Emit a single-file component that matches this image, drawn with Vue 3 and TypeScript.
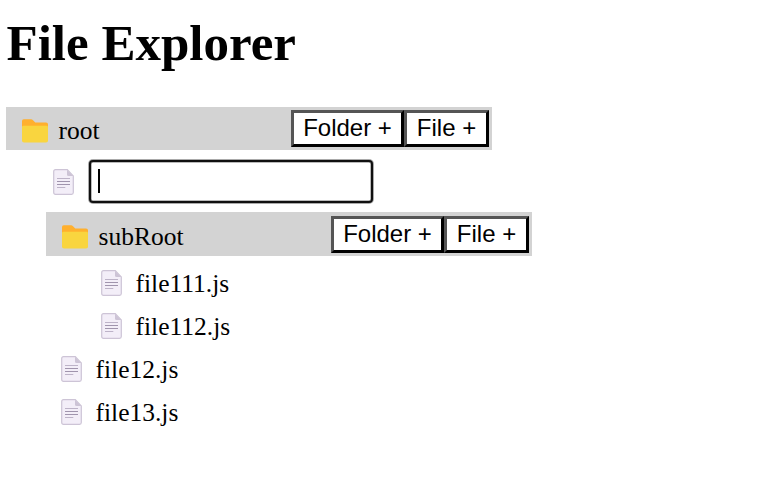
<script setup lang="ts">
import { nextTick, onMounted, ref } from 'vue'

interface Entry {
  name: string
  folder?: boolean
  adding?: boolean
  depth: number
}

const entries = ref<Entry[]>([
  { name: 'root', folder: true, adding: true, depth: 0 },
  { name: 'subRoot', folder: true, depth: 1 },
  { name: 'file111.js', depth: 2 },
  { name: 'file112.js', depth: 2 },
  { name: 'file12.js', depth: 1 },
  { name: 'file13.js', depth: 1 },
])

const draft = ref('')

onMounted(async () => {
  await nextTick()
  document.querySelector<HTMLInputElement>('.name-input')?.focus()
})
</script>

<template>
  <main class="explorer">
    <h1>File Explorer</h1>
    <template v-for="entry in entries" :key="entry.name">
      <div v-if="entry.folder" class="folder" :class="'depth-' + entry.depth">
        <svg class="folder-icon" viewBox="0 0 26 24">
          <path d="M0 2Q0 .3 1.700 .3H9Q10.200 .3 11 1.200L13.300 3.500H24Q26 3.500 26 5.300V9H0Z" fill="#ffb02e" />
          <path d="M0 8Q0 6.800 1.500 6.800H24.500Q26 6.800 26 8.200V21.700Q26 23.500 24 23.500H2Q0 23.500 0 21.700Z" fill="#f9d53f" />
        </svg>
        <span class="label">{{ entry.name }}</span>
        <div class="actions">
          <button type="button">Folder +</button>
          <button type="button">File +</button>
        </div>
      </div>
      <div v-else class="file" :class="'depth-' + entry.depth">
        <svg class="file-icon" viewBox="0 0 21 26">
          <path d="M2.500 .7H14.300L20.300 6.900V23.500Q20.300 25.300 18.500 25.300H2.500Q.7 25.300 .7 23.500V2.500Q.7 .7 2.500 .7Z" fill="#f3eef8" stroke="#cdc4d6" stroke-width="1.200" />
          <path d="M14 .7L20.300 7H15.500Q14 7 14 5.500Z" fill="#cdc4d6" />
          <path d="M4 9.500H17M4 18.500H12.300" stroke="#bdb3c8" stroke-width="1.100" />
          <path d="M4 12.500H17M4 15.500H17" stroke="#a094ad" stroke-width="1.100" />
        </svg>
        <span>{{ entry.name }}</span>
      </div>
      <div v-if="entry.adding" class="new-entry">
        <svg class="file-icon" viewBox="0 0 21 26">
          <path d="M2.500 .7H14.300L20.300 6.900V23.500Q20.300 25.300 18.500 25.300H2.500Q.7 25.300 .7 23.500V2.500Q.7 .7 2.500 .7Z" fill="#f3eef8" stroke="#cdc4d6" stroke-width="1.200" />
          <path d="M14 .7L20.300 7H15.500Q14 7 14 5.500Z" fill="#cdc4d6" />
          <path d="M4 9.500H17M4 18.500H12.300" stroke="#bdb3c8" stroke-width="1.100" />
          <path d="M4 12.500H17M4 15.500H17" stroke="#a094ad" stroke-width="1.100" />
        </svg>
        <div class="field">
          <span v-if="!draft" class="caret"></span>
          <input v-model="draft" class="name-input" type="text" />
        </div>
      </div>
    </template>
  </main>
</template>

<style>
body {
  background: #fff;
}
</style>

<style scoped>
.explorer {
  padding: 14px 0 0 6px;
  font-family: "Liberation Serif", "Times New Roman", serif;
  font-size: 25.5px;
  color: #000;
}

h1 {
  margin: 0 0 35px;
  padding-left: 0.5px;
  font-size: 51px;
  line-height: 58px;
  font-weight: 700;
}

.folder {
  display: flex;
  align-items: center;
  box-sizing: border-box;
  width: 486px;
  height: 43px;
  padding: 0 3px 0 16px;
  background: lightgray;
}

.folder.depth-1 {
  height: 44px;
  margin-bottom: 6px;
}

.depth-1 {
  margin-left: 40px;
}

.depth-2 {
  margin-left: 80px;
}

.folder-icon {
  width: 26px;
  height: 24px;
  margin-top: 5px;
}

.label {
  margin: 5px 0 0 10.500px;
}

.actions {
  display: flex;
  margin-left: auto;
}

button {
  box-sizing: border-box;
  width: 113px;
  height: 37px;
  padding: 0 0 2px;
  border: 3px solid;
  border-color: #555 #000 #000 #555;
  background: #fff;
  color: #000;
  font: 24px/30px "Liberation Sans", Arial, sans-serif;
  white-space: nowrap;
}

button + button {
  width: 85px;
}

.file {
  display: flex;
  align-items: center;
  height: 43px;
  padding-left: 15px;
}

.file-icon {
  flex: none;
  width: 21px;
  height: 26px;
}

.file .file-icon {
  margin-bottom: 2px;
}

.file span {
  margin-left: 13.500px;
}

.new-entry {
  display: flex;
  align-items: center;
  height: 62px;
  padding-left: 47px;
}

.new-entry .file-icon {
  margin-top: 2px;
}

.field {
  display: flex;
  align-items: center;
  box-sizing: border-box;
  width: 284px;
  height: 43px;
  margin: 1px 0 0 15px;
  padding: 0 0 1px 7px;
  border: 2px solid #101010;
  border-radius: 4px;
  box-shadow: 0 0 0 1px #aaa, inset 0 0 0 0.5px #777;
  background: #fff;
}

.caret {
  width: 2px;
  height: 24px;
  background: #000;
}

.name-input {
  flex: 1;
  min-width: 0;
  padding: 0;
  border: 0;
  outline: 0;
  background: transparent;
  caret-color: transparent;
  font: 24px "Liberation Sans", Arial, sans-serif;
}
</style>
